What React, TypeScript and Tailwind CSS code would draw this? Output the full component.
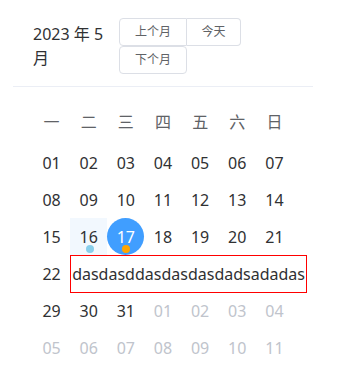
import React from "react";

type Day = { n: string; muted?: boolean };

const rows: Day[][] = [
  ["01", "02", "03", "04", "05", "06", "07"].map((n) => ({ n })),
  ["08", "09", "10", "11", "12", "13", "14"].map((n) => ({ n })),
  ["15", "16", "17", "18", "19", "20", "21"].map((n) => ({ n })),
  ["22", "23", "24", "25", "26", "27", "28"].map((n) => ({ n })),
  [
    { n: "29" },
    { n: "30" },
    { n: "31" },
    { n: "01", muted: true },
    { n: "02", muted: true },
    { n: "03", muted: true },
    { n: "04", muted: true },
  ],
  ["05", "06", "07", "08", "09", "10", "11"].map((n) => ({ n, muted: true })),
];

const weekdays = ["一", "二", "三", "四", "五", "六", "日"];

export default function App() {
  return (
    <div
      className="w-[338px] h-[381px] overflow-hidden bg-white"
      style={{ fontFamily: '"Noto Sans", "Noto Sans CJK SC", sans-serif' }}
    >
      <div className="ml-[13px] mt-[6px] w-[300px]">
        {/* header */}
        <div className="flex items-center px-[20px] py-[12px] border-b border-[#ebeef5]">
          <div className="w-[86px] shrink-0 text-[16px] leading-[24px] text-[#303133]">
            2023 年 5 月
          </div>
          <div className="flex flex-wrap w-[174px]">
            <button className="h-[28px] w-[68px] border border-[#dcdfe6] rounded-l-[4px] text-[12px] text-[#606266] bg-white">
              上个月
            </button>
            <button className="h-[28px] w-[54px] border border-l-0 border-[#dcdfe6] rounded-r-[4px] text-[12px] text-[#606266] bg-white">
              今天
            </button>
            <button className="h-[28px] w-[68px] border border-[#dcdfe6] rounded-[4px] text-[12px] text-[#606266] bg-white">
              下个月
            </button>
          </div>
        </div>
        {/* body */}
        <div className="px-[20px] pt-[12px]">
          <div className="grid grid-cols-7 h-[45px] items-center">
            {weekdays.map((w) => (
              <div key={w} className="text-center text-[16px] text-[#606266]">
                {w}
              </div>
            ))}
          </div>
          {rows.map((row, ri) => (
            <div key={ri} className="grid grid-cols-7">
              {row.map((d, ci) => {
                const is16 = ri === 2 && ci === 1;
                const is17 = ri === 2 && ci === 2;
                const is22 = ri === 3 && ci === 0;
                const hidden = ri === 3 && ci > 0;
                return (
                  <div
                    key={ci}
                    className={
                      "relative h-[37px] flex items-center justify-center text-[16px] " +
                      (is16 ? "bg-[#f2f8fe] " : "") +
                      (d.muted ? "text-[#c0c4cc]" : "text-[#303133]")
                    }
                  >
                    {is17 ? (
                      <div className="absolute inset-0 rounded-full bg-[#409eff]" />
                    ) : null}
                    {hidden ? null : (
                      <span className={"relative " + (is17 ? "text-white" : "")}>{d.n}</span>
                    )}
                    {is16 ? (
                      <div className="absolute left-1/2 top-[27px] -ml-[3px] w-[8px] h-[8px] rounded-full bg-[#87ceeb]" />
                    ) : null}
                    {is17 ? (
                      <div className="absolute left-1/2 top-[27px] -ml-[4px] w-[8px] h-[8px] rounded-full bg-[#ffa500]" />
                    ) : null}
                    {ri === 3 && ci === 1 ? (
                      <div className="absolute left-0 top-0 z-10 h-[38px] border border-[#ff0000] px-[1px] leading-[36px] whitespace-nowrap text-[#303133] bg-white">
                        dasdasddasdasdasdadsadadas
                      </div>
                    ) : null}
                    {is22 ? null : null}
                  </div>
                );
              })}
            </div>
          ))}
        </div>
      </div>
    </div>
  );
}
